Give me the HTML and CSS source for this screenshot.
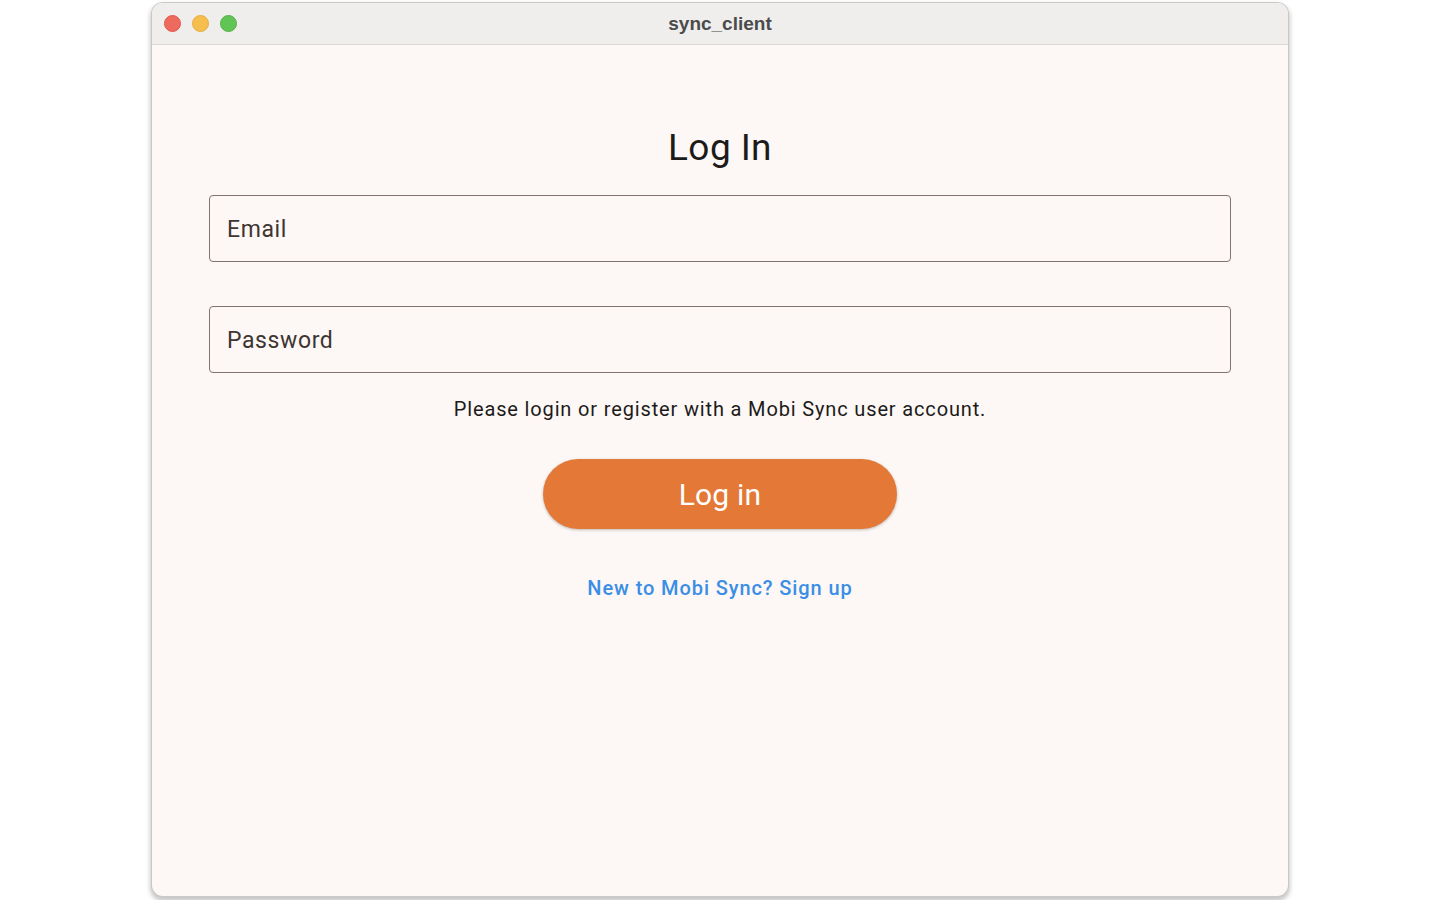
FILE: index.html
```html
<!DOCTYPE html>
<html lang="en">
<head>
<meta charset="utf-8">
<title>sync_client</title>
<link rel="stylesheet" href="styles.css">
</head>
<body>
<div class="window">
  <div class="titlebar">
    <div class="lights">
      <span class="light red"></span>
      <span class="light yellow"></span>
      <span class="light green"></span>
    </div>
    <div class="title">sync_client</div>
  </div>
  <main class="content">
    <h1 class="heading">Log In</h1>
    <div class="field"><span class="label">Email</span></div>
    <div class="field"><span class="label">Password</span></div>
    <p class="helper">Please login or register with a Mobi Sync user account.</p>
    <button class="login-btn">Log in</button>
    <a class="signup" href="#">New to Mobi Sync? Sign up</a>
  </main>
</div>
</body>
</html>
```

FILE: styles.css
```css
html, body {
  margin: 0;
  padding: 0;
  background: #ffffff;
  height: 100%;
  overflow: hidden;
}
body {
  display: flex;
  justify-content: center;
  font-family: Roboto, "Liberation Sans", sans-serif;
}
.window {
  width: 1136px;
  height: 893px;
  margin-top: 3px;
  border-radius: 11px;
  background: #fdf8f5;
  box-shadow: 0 0 0 1px #c9c9c9, 0 3px 4px 2px rgba(0,0,0,0.22);
  display: flex;
  flex-direction: column;
  overflow: hidden;
}
.titlebar {
  position: relative;
  height: 41px;
  flex: none;
  background: #efeeed;
  border-bottom: 1px solid #dad8d6;
  display: flex;
  align-items: center;
  justify-content: center;
}
.lights {
  position: absolute;
  left: 12px;
  top: 12px;
  display: flex;
  gap: 11px;
}
.light {
  width: 17px;
  height: 17px;
  border-radius: 50%;
  display: block;
  box-sizing: border-box;
}
.red { background: #ee6a5f; border: 1px solid #e0584d; }
.yellow { background: #f5be4f; border: 1px solid #e6ad3c; }
.green { background: #61c555; border: 1px solid #52b246; }
.title {
  font-family: "Liberation Sans", Arial, sans-serif;
  font-weight: bold;
  font-size: 19px;
  color: #4b4b4b;
  margin-top: 0;
}
.content {
  flex: 1;
  display: flex;
  flex-direction: column;
  align-items: center;
  padding: 0 57px;
}
.heading {
  margin: 82px 0 0;
  font-size: 37px;
  font-weight: 400;
  line-height: 42px;
  color: #1c1b1a;
  letter-spacing: 0.4px;
}
.field {
  align-self: stretch;
  box-sizing: border-box;
  height: 67px;
  border: 1px solid #81746f;
  border-radius: 4px;
  display: flex;
  align-items: center;
  padding: 2px 17px 0;
  margin-top: 26px;
}
.field + .field {
  margin-top: 44px;
}
.label {
  font-size: 23px;
  color: #3d3532;
  letter-spacing: 0.6px;
}
.helper {
  margin: 23px 0 0;
  font-size: 20px;
  line-height: 26px;
  color: #1c1b1a;
  letter-spacing: 0.85px;
}
.login-btn {
  margin-top: 37px;
  width: 354px;
  height: 70px;
  border: none;
  border-radius: 35px;
  background: #e47837;
  color: #ffffff;
  font-family: Roboto, "Liberation Sans", sans-serif;
  font-size: 30px;
  font-weight: 400;
  letter-spacing: 0.2px;
  box-shadow: 0 1px 3px rgba(0,0,0,0.25);
}
.signup {
  margin-top: 47px;
  font-size: 20px;
  font-weight: 500;
  color: #3a8ee6;
  text-decoration: none;
  letter-spacing: 0.9px;
}
```
